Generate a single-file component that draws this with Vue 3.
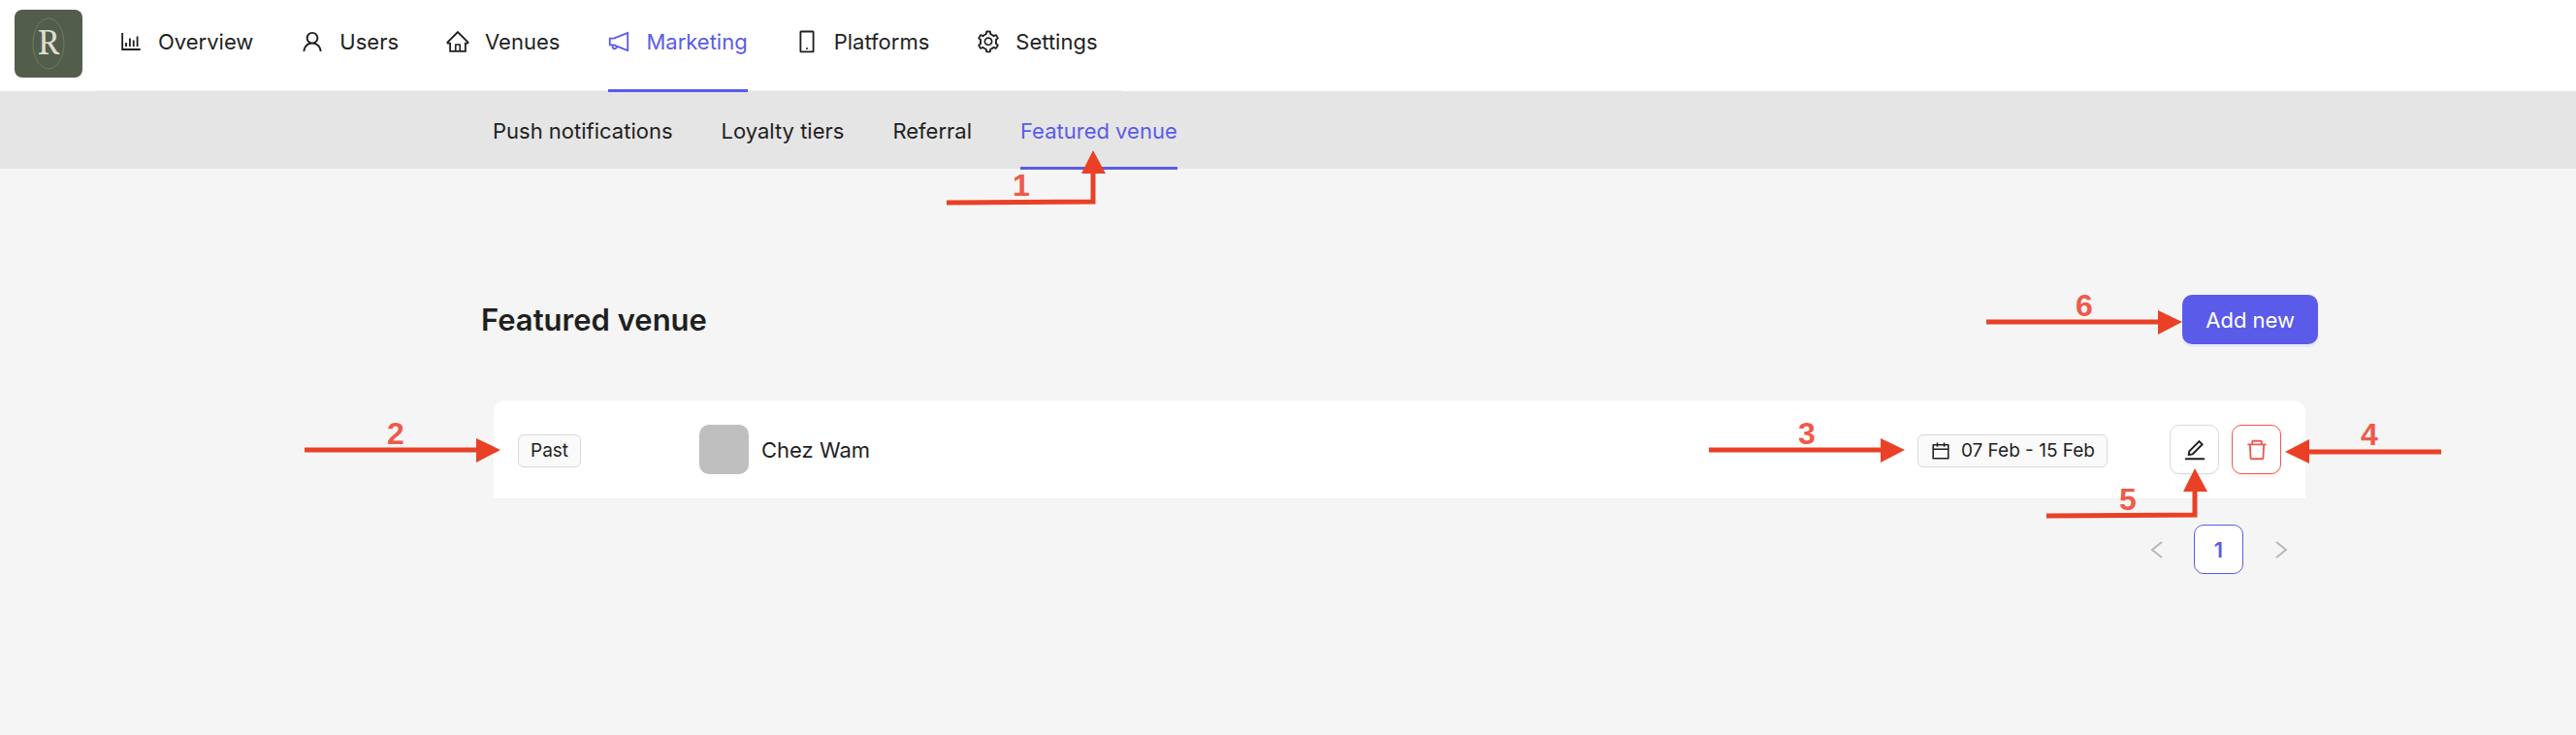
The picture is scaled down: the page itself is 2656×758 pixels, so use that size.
<script setup>
const paths = {
  chart: 'M888 792H200V168c0-4.4-3.6-8-8-8h-56c-4.4 0-8 3.6-8 8v688c0 4.4 3.6 8 8 8h752c4.4 0 8-3.6 8-8v-56c0-4.4-3.6-8-8-8zm-600-80h56c4.4 0 8-3.6 8-8V560c0-4.4-3.6-8-8-8h-56c-4.4 0-8 3.6-8 8v144c0 4.4 3.6 8 8 8zm152 0h56c4.4 0 8-3.6 8-8V384c0-4.4-3.6-8-8-8h-56c-4.4 0-8 3.6-8 8v320c0 4.4 3.6 8 8 8zm152 0h56c4.4 0 8-3.6 8-8V462c0-4.4-3.6-8-8-8h-56c-4.4 0-8 3.6-8 8v242c0 4.4 3.6 8 8 8zm152 0h56c4.4 0 8-3.6 8-8V304c0-4.4-3.6-8-8-8h-56c-4.4 0-8 3.6-8 8v400c0 4.4 3.6 8 8 8z',
  user: 'M858.5 763.6a374 374 0 00-80.6-119.5 375.63 375.63 0 00-119.5-80.6c-.4-.2-.8-.3-1.2-.5C719.5 518 760 444.7 760 362c0-137-111-248-248-248S264 225 264 362c0 82.7 40.5 156 102.8 201.1-.4.2-.8.3-1.2.5-44.8 18.9-85 46-119.5 80.6a375.63 375.63 0 00-80.6 119.5A371.7 371.7 0 00136 901.8a8 8 0 008 8.2h60c4.4 0 7.9-3.5 8-7.8 2-77.2 33-149.5 87.8-204.3 56.7-56.7 132-87.9 212.2-87.9s155.5 31.2 212.2 87.9C779 752.7 810 825 812 902.2c.1 4.4 3.6 7.8 8 7.8h60a8 8 0 008-8.2c-1-47.8-10.9-94.3-29.5-138.2zM512 534c-45.9 0-89.1-17.9-121.6-50.4S340 407.9 340 362c0-45.9 17.9-89.1 50.4-121.6S466.1 190 512 190s89.1 17.9 121.6 50.4S684 316.1 684 362c0 45.9-17.9 89.1-50.4 121.6S557.9 534 512 534z',
  home: 'M946.5 505L560.1 118.8l-25.9-25.9a31.5 31.5 0 00-44.4 0L77.5 505a63.9 63.9 0 00-18.8 46c.4 35.2 29.7 63.3 64.9 63.3h42.5V940h691.8V614.3h43.4c17.1 0 33.2-6.7 45.3-18.8a63.6 63.6 0 0018.7-45.3c0-17-6.7-33.1-18.8-45.2zM568 868H456V664h112v204zm217.9-325.7V868H632V640c0-22.1-17.9-40-40-40H432c-22.1 0-40 17.9-40 40v228H238.1V542.3h-96l370-369.7 23.1 23.1L882 542.3h-96.1z',
  horn: 'M880 112c-3.8 0-7.7.7-11.6 2.3L292 345.9H128c-8.8 0-16 7.4-16 16.6v299c0 9.2 7.2 16.6 16 16.6h101.7c-3.7 11.6-5.7 23.9-5.7 36.4 0 65.9 53.8 119.5 120 119.5 55.4 0 102.1-37.6 115.9-88.4l408.6 164.2c3.9 1.5 7.8 2.3 11.6 2.3 16.9 0 32-14.2 32-33.2V145.2C912 126.2 897 112 880 112zM344 762.3c-26.5 0-48-21.4-48-47.8 0-11.2 3.9-21.9 11-30.4l84.9 34.1c-2 24.6-22.7 44.1-47.9 44.1zm496 58.4L318.8 611.3l-12.9-5.2H184V417.9h121.9l12.9-5.2L840 203.3v617.4z',
  mobile: 'M744 62H280c-35.3 0-64 28.7-64 64v768c0 35.3 28.7 64 64 64h464c35.3 0 64-28.7 64-64V126c0-35.3-28.7-64-64-64zm-8 824H288V134h448v752zM472 784a40 40 0 1080 0 40 40 0 10-80 0z',
  gear: 'M924.8 625.7l-65.5-56c3.1-19 4.7-38.4 4.7-57.8s-1.6-38.8-4.7-57.8l65.5-56a32.03 32.03 0 009.3-35.2l-.9-2.6a443.74 443.74 0 00-79.7-137.9l-1.8-2.1a32.12 32.12 0 00-35.1-9.5l-81.3 28.9c-30-24.6-63.5-44-99.7-57.6l-15.7-85a32.05 32.05 0 00-25.8-25.7l-2.7-.5c-52.1-9.4-106.9-9.4-159 0l-2.7.5a32.05 32.05 0 00-25.8 25.7l-15.8 85.4a351.86 351.86 0 00-99 57.4l-81.9-29.1a32 32 0 00-35.1 9.5l-1.8 2.1a446.02 446.02 0 00-79.7 137.9l-.9 2.6c-4.5 12.5-.8 26.5 9.3 35.2l66.3 56.6c-3.1 18.8-4.6 38-4.6 57.1 0 19.2 1.5 38.4 4.6 57.1L99 625.5a32.03 32.03 0 00-9.3 35.2l.9 2.6c18.1 50.4 44.9 96.9 79.7 137.9l1.8 2.1a32.12 32.12 0 0035.1 9.5l81.9-29.1c29.8 24.5 63.1 43.9 99 57.4l15.8 85.4a32.05 32.05 0 0025.8 25.7l2.7.5a449.4 449.4 0 00159 0l2.7-.5a32.05 32.05 0 0025.8-25.7l15.7-85a350 350 0 0099.7-57.6l81.3 28.9a32 32 0 0035.1-9.5l1.8-2.1c34.8-41.1 61.6-87.5 79.7-137.9l.9-2.6c4.5-12.3.8-26.3-9.3-35zM788.3 465.9c2.5 15.1 3.8 30.6 3.8 46.1s-1.3 31-3.8 46.1l-6.6 40.1 74.7 63.9a370.03 370.03 0 01-42.6 73.6L721 702.8l-31.4 25.8c-23.9 19.6-50.5 35-79.3 45.8l-38.1 14.3-17.9 97a377.5 377.5 0 01-85 0l-17.9-97.2-37.8-14.5c-28.5-10.8-55-26.2-78.7-45.7l-31.4-25.9-93.4 33.2c-17-22.9-31.2-47.6-42.6-73.6l75.5-64.5-6.5-40c-2.4-14.9-3.7-30.3-3.7-45.5 0-15.3 1.2-30.6 3.7-45.5l6.5-40-75.5-64.5c11.3-26.1 25.6-50.7 42.6-73.6l93.4 33.2 31.4-25.9c23.7-19.5 50.2-34.9 78.7-45.7l37.9-14.3 17.9-97.2c28.1-3.2 56.8-3.2 85 0l17.9 97 38.1 14.3c28.7 10.8 55.4 26.2 79.3 45.8l31.4 25.8 92.8-32.9c17 22.9 31.2 47.6 42.6 73.6L781.8 426l6.5 39.9zM512 326c-97.2 0-176 78.8-176 176s78.8 176 176 176 176-78.8 176-176-78.8-176-176-176zm79.2 255.2A111.6 111.6 0 01512 614c-29.9 0-58-11.7-79.2-32.8A111.6 111.6 0 01400 502c0-29.9 11.7-58 32.8-79.2C454 401.6 482.1 390 512 390c29.9 0 58 11.6 79.2 32.8A111.6 111.6 0 01624 502c0 29.9-11.7 58-32.8 79.2z',
  edit: 'M257.7 752c2 0 4-.2 6-.5L431.9 722c2-.4 3.9-1.3 5.3-2.8l423.9-423.9a9.96 9.96 0 000-14.1L694.9 114.9c-1.9-1.9-4.4-2.9-7.1-2.9s-5.2 1-7.1 2.9L256.8 538.8c-1.5 1.5-2.4 3.3-2.8 5.3l-29.5 168.2a33.5 33.5 0 009.4 29.8c6.6 6.4 14.9 9.9 23.8 9.9zm67.4-174.4L687.8 215l73.3 73.3-362.7 362.6-88.9 15.7 15.6-89zM880 836H144c-17.7 0-32 14.3-32 32v36c0 4.4 3.6 8 8 8h784c4.4 0 8-3.6 8-8v-36c0-17.7-14.3-32-32-32z',
  trash: 'M360 184h-8c4.4 0 8-3.6 8-8v8h304v-8c0 4.4 3.6 8 8 8h-8v72h72v-80c0-35.3-28.7-64-64-64H352c-35.3 0-64 28.7-64 64v80h72v-72zm504 72H160c-17.7 0-32 14.3-32 32v32c0 4.4 3.6 8 8 8h60.4l24.7 523c1.6 34.1 29.8 61 63.9 61h454c34.2 0 62.3-26.8 63.9-61l24.7-523H888c4.4 0 8-3.6 8-8v-32c0-17.7-14.3-32-32-32zM731.3 840H292.7l-24.2-512h487l-24.2 512z',
  calendar: 'M880 184H712v-64c0-4.4-3.6-8-8-8h-56c-4.4 0-8 3.6-8 8v64H384v-64c0-4.4-3.6-8-8-8h-56c-4.4 0-8 3.6-8 8v64H144c-17.7 0-32 14.3-32 32v664c0 17.7 14.3 32 32 32h736c17.7 0 32-14.3 32-32V216c0-17.7-14.3-32-32-32zm-40 656H184V460h656v380zM184 392V256h128v48c0 4.4 3.6 8 8 8h56c4.4 0 8-3.6 8-8v-48h256v48c0 4.4 3.6 8 8 8h56c4.4 0 8-3.6 8-8v-48h128v136H184z',
}
const menu = [
  { label: 'Overview', icon: 'chart' },
  { label: 'Users', icon: 'user' },
  { label: 'Venues', icon: 'home' },
  { label: 'Marketing', icon: 'horn', active: true },
  { label: 'Platforms', icon: 'mobile' },
  { label: 'Settings', icon: 'gear' },
]
const tabs = [
  { label: 'Push notifications' },
  { label: 'Loyalty tiers' },
  { label: 'Referral' },
  { label: 'Featured venue', active: true },
]
const callouts = [
  { n: 1, x: 1053, y: 202, line: 'M976 209L1127 208V178', head: '1127,155 1115,179 1140,179' },
  { n: 2, x: 408, y: 458, line: 'M314 464H493', head: '516,464 491,452 491,477' },
  { n: 3, x: 1863, y: 458, line: 'M1762 464H1941', head: '1964,464 1939,452 1939,477' },
  { n: 4, x: 2443, y: 459, line: 'M2517 466H2380', head: '2356,466 2381,453 2381,478' },
  { n: 5, x: 2194, y: 526, line: 'M2110 532L2263 531V506', head: '2263,483 2251,507 2276,507' },
  { n: 6, x: 2149, y: 326, line: 'M2048 332H2226', head: '2250,332 2225,320 2225,345' },
]
</script>

<template>
  <div class="page">
    <header class="top">
      <a class="logo" href="#" aria-label="Home">
        <svg viewBox="0 0 70 70" aria-hidden="true">
          <ellipse cx="35" cy="35" rx="16" ry="26" />
          <text x="35" y="46" text-anchor="middle">R</text>
        </svg>
      </a>
      <nav class="menu">
        <a v-for="m in menu" :key="m.label" href="#" :class="{ active: m.active }">
          <span class="link">
            <svg class="icon" viewBox="0 0 1024 1024" aria-hidden="true"><path :d="paths[m.icon]" /></svg>
            {{ m.label }}
          </span>
        </a>
      </nav>
    </header>

    <nav class="tabs">
      <a v-for="t in tabs" :key="t.label" href="#" :class="{ active: t.active }">{{ t.label }}</a>
    </nav>

    <main>
      <div class="heading">
        <h1>Featured venue</h1>
        <button class="primary" type="button">Add new</button>
      </div>

      <section class="list">
        <table>
          <tbody>
            <tr>
              <td class="status"><span class="tag">Past</span></td>
              <td>
                <div class="venue"><span class="avatar"></span>Chez Wam</div>
              </td>
              <td class="dates">
                <span class="tag">
                  <svg class="small-icon" viewBox="0 0 1024 1024" aria-hidden="true"><path :d="paths.calendar" /></svg>
                  07 Feb - 15 Feb
                </span>
              </td>
              <td class="actions">
                <div class="buttons">
                  <button type="button" aria-label="Edit">
                    <svg class="icon" viewBox="0 0 1024 1024" aria-hidden="true"><path :d="paths.edit" /></svg>
                  </button>
                  <button class="danger" type="button" aria-label="Delete">
                    <svg class="icon" viewBox="0 0 1024 1024" aria-hidden="true"><path :d="paths.trash" /></svg>
                  </button>
                </div>
              </td>
            </tr>
          </tbody>
        </table>

        <div class="pager">
          <button type="button" aria-label="Previous page" disabled>
            <svg viewBox="0 0 16 20" aria-hidden="true"><path d="M13 2L3 10L13 18" /></svg>
          </button>
          <button class="current" type="button">1</button>
          <button type="button" aria-label="Next page" disabled>
            <svg viewBox="0 0 16 20" aria-hidden="true"><path d="M3 2L13 10L3 18" /></svg>
          </button>
        </div>
      </section>
    </main>

    <svg class="callouts" width="2656" height="758" viewBox="0 0 2656 758">
      <g v-for="c in callouts" :key="c.n">
        <path :d="c.line" />
        <polygon :points="c.head" />
        <text :x="c.x" :y="c.y" text-anchor="middle">{{ c.n }}</text>
      </g>
    </svg>
  </div>
</template>

<style>
body {
  margin: 0;
  background: #f5f5f5;
}
</style>

<style scoped>
.page {
  position: relative;
  min-height: 100vh;
  overflow: hidden;
  background: #f5f5f5;
  color: #1f1f1f;
  font: 22px/34px Inter, "Liberation Sans", sans-serif;
}
a {
  color: inherit;
  text-decoration: none;
}
.top {
  display: flex;
  background: #fff;
}
.logo {
  align-self: flex-start;
  width: 70px;
  height: 70px;
  margin: 10px 14px 14px 15px;
  border-radius: 8px;
  background: #525e4b;
}
.logo svg {
  display: block;
}
.logo ellipse {
  fill: none;
  stroke: #6f7966;
}
.logo text {
  font: 34px "Noto Serif", "DejaVu Serif", "Liberation Serif", serif;
  fill: #dfdccf;
}
.menu {
  display: flex;
  height: 93px;
  border-bottom: 1px solid #f0f0f0;
}
.menu a {
  padding: 0 25px;
}
.menu .link {
  display: flex;
  align-items: center;
  gap: 15px;
  height: 86px;
  padding-bottom: 6px;
  border-bottom: 3px solid transparent;
}
.menu .icon {
  margin-left: -2px;
}
.active,
.menu .active .link {
  color: #5b5bea;
}
.menu .active .link {
  border-color: #5b5bea;
}
.icon {
  flex: none;
  width: 26px;
  height: 26px;
  fill: currentColor;
}
.tabs {
  display: flex;
  gap: 50px;
  height: 80px;
  padding-left: 508px;
  background: #e5e5e5;
}
.tabs a {
  height: 78px;
  line-height: 82px;
  border-bottom: 3px solid transparent;
}
.tabs .active {
  border-color: #5b5bea;
}
main {
  padding: 130px 266px 0 496px;
}
.heading {
  display: flex;
  align-items: center;
  justify-content: space-between;
}
h1 {
  margin: 0;
  font-size: 31px;
  line-height: 40px;
  font-weight: 600;
}
button {
  box-sizing: border-box;
  display: flex;
  align-items: center;
  justify-content: center;
  height: 51px;
  padding: 0;
  border: 1px solid transparent;
  border-radius: 10px;
  font: inherit;
}
.primary {
  padding: 0 23px;
  background: #5b5bea;
  color: #fff;
  box-shadow: 0 3px 0 #e9e8f7;
}
.list {
  margin: 58px 13px 0;
}
table {
  width: 100%;
  border-spacing: 0;
  background: #fff;
  border-radius: 12px 12px 0 0;
}
td {
  padding: 25px;
  border-bottom: 1px solid #f0f0f0;
}
.status {
  width: 137px;
}
.tag {
  display: inline-flex;
  align-items: center;
  gap: 10px;
  padding: 0 12px;
  border: 1px solid #d9d9d9;
  border-radius: 6px;
  background: #fafafa;
  font-size: 19px;
  line-height: 32px;
  vertical-align: middle;
}
.venue {
  display: flex;
  align-items: center;
  gap: 13px;
}
.avatar {
  width: 51px;
  height: 51px;
  border-radius: 10px;
  background: #bfbfbf;
}
.dates {
  text-align: right;
}
.small-icon {
  width: 22px;
  height: 22px;
  fill: currentColor;
}
.actions {
  width: 115px;
  padding-left: 39px;
}
.buttons {
  display: flex;
  gap: 13px;
}
.buttons button {
  width: 51px;
  border-color: #d9d9d9;
  background: #fff;
  color: #1f1f1f;
  box-shadow: 0 3px 0 #fafafa;
}
.buttons .danger {
  border-color: #eb5a50;
  color: #eb5a50;
  box-shadow: 0 3px 0 #fff4f0;
}
.pager {
  display: flex;
  justify-content: flex-end;
  gap: 13px;
  margin-top: 26px;
}
.pager button {
  width: 51px;
  background: transparent;
}
.pager svg {
  width: 16px;
  height: 20px;
  fill: none;
  stroke: #b8b8b8;
  stroke-width: 2;
}
.pager .current {
  border-color: #5b5bea;
  background: #fff;
  color: #5b5bea;
  font-weight: 600;
}
.callouts {
  position: absolute;
  top: 0;
  left: 0;
  pointer-events: none;
}
.callouts path {
  fill: none;
  stroke: #ea4025;
  stroke-width: 5;
}
.callouts polygon {
  fill: #ea4025;
}
.callouts text {
  font: bold 32px "Liberation Sans", Arial, sans-serif;
  fill: #ef5a4a;
}
</style>
